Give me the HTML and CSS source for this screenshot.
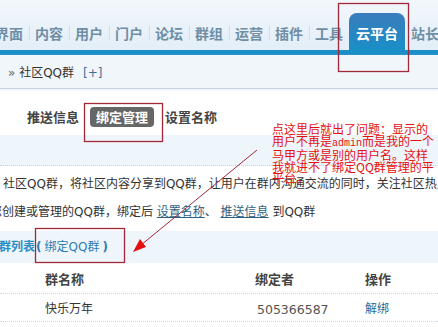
FILE: index.html
```html
<!DOCTYPE html>
<html lang="zh-CN">
<head>
    <meta charset="UTF-8">
    <title>社区QQ群 - 云平台</title>
    <link rel="stylesheet" href="styles.css">
</head>
<body>
    <div class="header">
        <ul class="nav">
            <li>界面</li>
            <li>内容</li>
            <li>用户</li>
            <li>门户</li>
            <li>论坛</li>
            <li>群组</li>
            <li>运营</li>
            <li>插件</li>
            <li>工具</li>
            <li class="active">云平台</li>
            <li>站长</li>
        </ul>
    </div>

    <div class="crumb">
        <span class="arrow">»</span> 社区QQ群<a href="#" class="add">[+]</a>
    </div>

    <div class="subnav">
        <a href="#">推送信息</a>
        <a href="#" class="on">绑定管理</a>
        <a href="#">设置名称</a>
    </div>

    <div class="band"></div>

    <div class="desc">
        <p class="first">社区QQ群，将社区内容分享到QQ群，让用户在群内沟通交流的同时，关注社区热点</p>
        <p class="second">您创建或管理的QQ群，绑定后 <a href="#">设置名称</a>、 <a href="#">推送信息</a> 到QQ群</p>
    </div>

    <div class="list-title"><b>群列表</b><span class="paren">(</span>绑定QQ群<span class="paren">)</span></div>

    <div class="groups">
        <div class="row head">
            <span>群名称</span>
            <span>绑定者</span>
            <span>操作</span>
        </div>
        <div class="row">
            <span>快乐万年</span>
            <span class="uid">505366587</span>
            <a href="#">解绑</a>
        </div>
        <div class="row">
            <span>如意快乐群</span>
            <span class="uid">505366587</span>
            <a href="#">解绑</a>
        </div>
    </div>

    <!-- annotation drawn over the screenshot -->
    <div class="note">
        点这里后就出了问题：显示的<br>
        用户不再是<span class="mono">admin</span>而是我的一个<br>
        马甲方或是别的用户名。这样<br>
        我就进不了绑定QQ群管理的平<br>
        平台。
    </div>

    <svg class="marks" width="438" height="327" viewBox="0 0 438 327">
        <rect x="338.5" y="3.5" width="70" height="68"/>
        <rect x="84.5" y="103.5" width="78" height="38"/>
        <rect x="35.5" y="228.5" width="89" height="34"/>
        <line x1="257" y1="150" x2="141" y2="245"/>
        <polygon class="head" points="133,252 146,247 140,239"/>
    </svg>
</body>
</html>
```

FILE: styles.css
```css
* {
    margin: 0;
    padding: 0;
    box-sizing: border-box;
}

body {
    position: relative;
    width: 438px;
    height: 327px;
    overflow: hidden;
    background: #fff;
    color: #333;
    font-family: "DejaVu Sans", "Noto Sans CJK SC", sans-serif;
    font-size: 12px;
}

a {
    color: #336699;
    text-decoration: none;
}

/* top navigation */
.header {
    height: 55px;
    background: linear-gradient(#f2f7fc, #e3eef7);
    border-bottom: 5px solid #1a8ec6;
}

.nav {
    list-style: none;
    display: flex;
    align-items: flex-end;
    height: 50px;
    margin-left: -11px;
    white-space: nowrap;
}

.nav li {
    border-left: 1px solid #d2e0ea;
    padding: 0 6px 0 5px;
    margin-bottom: 10px;
    line-height: 14px;
    font-family: "Noto Sans CJK SC", sans-serif;
    font-size: 14px;
    font-weight: bold;
    color: #6f8ea5;
}

.nav li.active {
    border-left: none;
    margin-bottom: 0;
    padding: 13px 7px 10px;
    border-radius: 8px 8px 0 0;
    background: linear-gradient(#3a7cbd, #1a8ec6);
    color: #fff;
}

.nav li.active + li {
    border-left-color: transparent;
}

/* breadcrumb */
.crumb {
    height: 34px;
    padding: 3px 0 0 8px;
    line-height: 30px;
    background: #f1f6fb;
    border-bottom: 1px solid #c6d4df;
    box-shadow: 0 1px 2px #e6edf3;
}

.crumb .arrow {
    color: #666;
}

.crumb .add {
    margin-left: 9px;
    color: #3a6f9a;
}

/* sub tabs */
.subnav {
    display: flex;
    align-items: center;
    gap: 11px;
    height: 46px;
    padding: 10px 0 0 27px;
    font-family: "Noto Sans CJK SC", sans-serif;
    font-size: 13px;
    font-weight: bold;
}

.subnav a {
    color: #444;
    line-height: 20px;
}

.subnav a.on {
    padding: 0 6px;
    border-radius: 4px;
    background: #666;
    color: #fff;
}

.band {
    height: 31px;
    background: #eef5fb;
    border-bottom: 1px dotted #c3d3df;
}

/* description */
.desc {
    padding: 4px 0 5px;
    line-height: 28px;
    white-space: nowrap;
}

.desc .first {
    padding-left: 3px;
}

.desc .second {
    text-indent: -10px;
}

.desc a {
    text-decoration: underline;
    color: #2f5f82;
}

.list-title {
    height: 32px;
    line-height: 32px;
    text-indent: -1px;
    background: #eef5fb;
    color: #2f7db5;
}

.list-title b {
    color: #2b8dc4;
}

.list-title .paren {
    margin: 0 3px 0 1px;
    font-weight: bold;
}

.list-title .paren + .paren,
.list-title .paren:last-child {
    margin: 0 0 0 3px;
}

/* group table */
.row {
    display: grid;
    grid-template-columns: 210px 110px 1fr;
    align-items: center;
    height: 28px;
    padding-left: 45px;
    border-bottom: 1px dotted #cbd8e2;
}

.row.head {
    height: 31px;
    font-family: "Noto Sans CJK SC", sans-serif;
    font-size: 13px;
    font-weight: bold;
    color: #444;
}

.row .uid {
    padding: 3px 0 0 2px;
    font-size: 12.5px;
    color: #555;
}

.row a {
    color: #2b6a96;
}

/* red annotation */
.note {
    position: absolute;
    left: 272px;
    top: 123px;
    font-family: "Noto Sans CJK SC", sans-serif;
    font-size: 12px;
    line-height: 11.6px;
    color: #e41010;
    white-space: nowrap;
}

.note .mono {
    font-family: "Liberation Mono", monospace;
    font-size: 10px;
}

.marks {
    position: absolute;
    left: 0;
    top: 0;
    pointer-events: none;
}

.marks rect {
    fill: none;
    stroke: #a32838;
    stroke-width: 1.3;
}

.marks line {
    stroke: #a3283a;
    stroke-width: 1;
}

.marks .head {
    fill: #e41010;
}
```
